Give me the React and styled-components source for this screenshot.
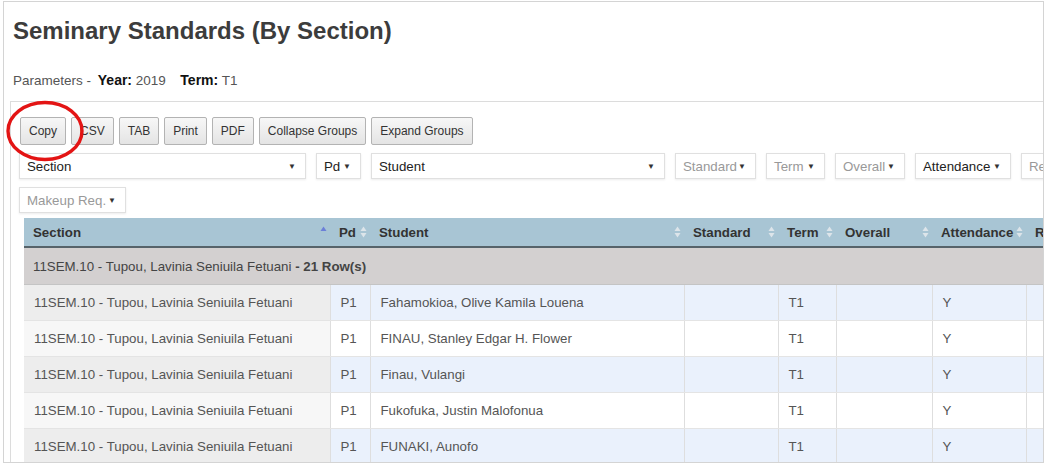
import React from "react";
import styled, { createGlobalStyle } from "styled-components";

const GlobalStyle = createGlobalStyle`
  body {
    margin: 0;
    background: #fff;
    font-family: "Liberation Sans", Arial, sans-serif;
  }
`;

const buttons = ["Copy", "CSV", "TAB", "Print", "PDF", "Collapse Groups", "Expand Groups"];

const filters = [
    { label: "Section", width: 287 },
    { label: "Pd", width: 45 },
    { label: "Student", width: 294 },
    { label: "Standard", width: 81, muted: true },
    { label: "Term", width: 59, muted: true },
    { label: "Overall", width: 70, muted: true },
    { label: "Attendance", width: 96 },
    { label: "Remediation", width: 110, muted: true },
    { label: "Makeup Req.", width: 107, muted: true },
];

const columns = [
    { label: "Section", width: 306, sort: "asc" },
    { label: "Pd", width: 40 },
    { label: "Student", width: 314 },
    { label: "Standard", width: 94 },
    { label: "Term", width: 58 },
    { label: "Overall", width: 96 },
    { label: "Attendance", width: 94 },
    { label: "Remediation", width: 110 },
];

const section = "11SEM.10 - Tupou, Lavinia Seniuila Fetuani";
const students = [
    "Fahamokioa, Olive Kamila Louena",
    "FINAU, Stanley Edgar H. Flower",
    "Finau, Vulangi",
    "Fukofuka, Justin Malofonua",
    "FUNAKI, Aunofo",
];

const App = () => {
    return (
        <>
            <GlobalStyle />
            <Frame>
                <Title>Seminary Standards (By Section)</Title>
                <Params>
                    Parameters - <b>Year:</b> 2019 <Gap /> <b>Term:</b> T1
                </Params>
                <Panel>
                    <Toolbar>
                        {buttons.map((b) => (
                            <Button key={b}>{b}</Button>
                        ))}
                    </Toolbar>
                    <Filters>
                        {filters.map((f) => (
                            <Filter key={f.label} $width={f.width} $muted={f.muted}>
                                <span>{f.label}</span>
                                <Caret>▼</Caret>
                            </Filter>
                        ))}
                    </Filters>
                    <TableWrap>
                        <Table>
                            <colgroup>
                                {columns.map((c) => (
                                    <col key={c.label} style={{ width: c.width }} />
                                ))}
                            </colgroup>
                            <thead>
                                <tr>
                                    {columns.map((c) => (
                                        <Th key={c.label}>
                                            {c.label}
                                            <SortIcon $sort={c.sort}>
                                                <svg width="7" height="12" viewBox="0 0 7 12">
                                                    <path d="M3.5 0.5 L6.5 5 L0.5 5 Z" className="up" />
                                                    <path d="M3.5 11.5 L6.5 7 L0.5 7 Z" className="down" />
                                                </svg>
                                            </SortIcon>
                                        </Th>
                                    ))}
                                </tr>
                            </thead>
                            <tbody>
                                <tr>
                                    <GroupCell colSpan={columns.length}>
                                        {section} <b>- 21 Row(s)</b>
                                    </GroupCell>
                                </tr>
                                {students.map((s, i) => (
                                    <Row key={s} $odd={i % 2 === 0}>
                                        <Td>{section}</Td>
                                        <Td>P1</Td>
                                        <Td>{s}</Td>
                                        <Td></Td>
                                        <Td>T1</Td>
                                        <Td></Td>
                                        <Td>Y</Td>
                                        <Td></Td>
                                    </Row>
                                ))}
                            </tbody>
                        </Table>
                    </TableWrap>
                </Panel>
                <Circle width="80" height="62" viewBox="0 0 80 62">
                    <ellipse cx="40" cy="31" rx="37" ry="28.5" />
                </Circle>
            </Frame>
        </>
    );
};

export default App;

const Frame = styled.div`
    position: relative;
    box-sizing: border-box;
    width: 1041px;
    height: 462px;
    margin: 1px 0 0 3px;
    border: 1px solid #d4d4d4;
    overflow: hidden;
`;

const Title = styled.h1`
    margin: 0;
    padding: 15px 0 0 9px;
    font-size: 24px;
    line-height: 28px;
    font-weight: bold;
    color: #3c3c3c;
`;

const Params = styled.div`
    padding: 27px 0 0 9px;
    font-size: 13.5px;
    line-height: 16px;
    color: #555;
    b {
        color: #111;
        font-size: 14px;
        margin-left: 3px;
    }
`;

const Gap = styled.span`
    display: inline-block;
    width: 4px;
`;

const Panel = styled.div`
    margin: 12px 0 0 6px;
    border-top: 1px solid #dcdcdc;
    border-left: 1px solid #dcdcdc;
    padding: 15px 0 0 8px;
    height: 400px;
`;

const Toolbar = styled.div`
    display: flex;
    gap: 5px;
    padding-left: 1px;
`;

const Button = styled.button`
    height: 28px;
    padding: 0 8px;
    font-family: "Liberation Sans", Arial, sans-serif;
    font-size: 12px;
    color: #333;
    background: linear-gradient(#f7f7f7, #e4e4e4);
    border: 1px solid #b3b3b3;
    border-radius: 2px;
`;

const Filters = styled.div`
    display: flex;
    flex-wrap: wrap;
    gap: 8px 10px;
    width: 1140px;
    margin-top: 8px;
`;

const Filter = styled.div`
    box-sizing: border-box;
    width: ${(p) => p.$width}px;
    height: 26px;
    display: flex;
    align-items: center;
    justify-content: space-between;
    padding: 0 9px 0 7px;
    border: 1px solid #e0e0e0;
    box-shadow: 0 1px 2px rgba(0, 0, 0, 0.08);
    background: #fff;
    font-size: 13.3px;
    color: ${(p) => (p.$muted ? "#999" : "#222")};
`;

const Caret = styled.span`
    font-size: 8px;
    color: #333;
`;

const TableWrap = styled.div`
    margin-top: 5px;
    padding-left: 5px;
`;

const Table = styled.table`
    border-collapse: collapse;
    table-layout: fixed;
    width: 1112px;
    font-size: 13.3px;
`;

const Th = styled.th`
    position: relative;
    height: 28px;
    padding: 0 9px;
    text-align: left;
    background: #a8c5d4;
    color: #333;
    font-weight: bold;
    border-bottom: 2px solid #56636a;
    white-space: nowrap;
`;

const SortIcon = styled.span`
    position: absolute;
    right: 3px;
    top: 8px;
    line-height: 0;
    path.up {
        fill: ${(p) => (p.$sort === "asc" ? "#6b7fd8" : "#dde5ea")};
    }
    path.down {
        fill: ${(p) => (p.$sort === "asc" ? "transparent" : "#dde5ea")};
    }
`;

const GroupCell = styled.td`
    height: 36px;
    padding: 0 9px;
    background: #d3d0d0;
    color: #444;
    border-bottom: 1px solid #c4c4c4;
    white-space: nowrap;
`;

const Row = styled.tr`
    background: ${(p) => (p.$odd ? "#eaf1fc" : "#fff")};
    td:first-child {
        background: ${(p) => (p.$odd ? "#ededed" : "#f7f7f7")};
    }
`;

const Td = styled.td`
    height: 35px;
    padding: 0 10px;
    color: #555;
    border-right: 1px solid #dedede;
    border-bottom: 1px solid #e4e4e4;
    white-space: nowrap;
    overflow: hidden;
`;

const Circle = styled.svg`
    position: absolute;
    left: 1px;
    top: 98px;
    ellipse {
        fill: none;
        stroke: #e31414;
        stroke-width: 3.4;
    }
`;
